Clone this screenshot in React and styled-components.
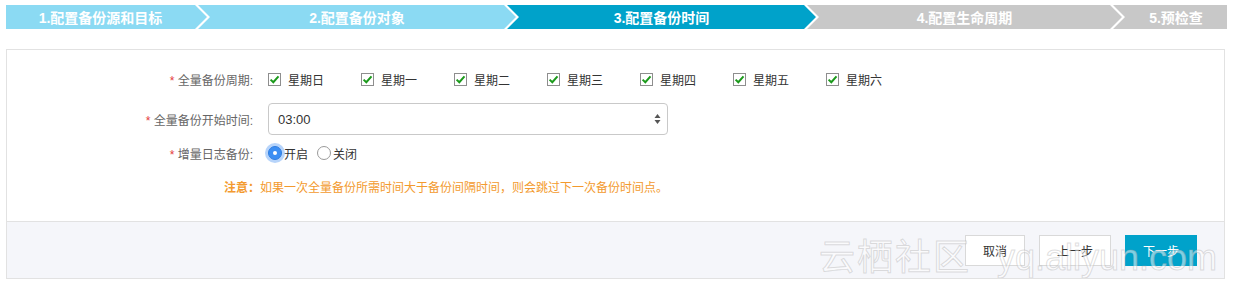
import React from "react";
import styled, { createGlobalStyle, css } from "styled-components";

const GlobalStyle = createGlobalStyle`
  html, body {
    margin: 0;
    padding: 0;
    background: #fff;
  }
  body {
    font-family: "Liberation Sans", "Noto Sans CJK SC", sans-serif;
    -webkit-font-smoothing: antialiased;
  }
`;

const steps = [
  { label: "1.配置备份源和目标", width: 201, state: "done" },
  { label: "2.配置备份对象", width: 318, state: "done" },
  { label: "3.配置备份时间", width: 309, state: "active" },
  { label: "4.配置生命周期", width: 315, state: "todo" },
  { label: "5.预检查", width: 114, state: "todo" },
];

const days = ["星期日", "星期一", "星期二", "星期三", "星期四", "星期五", "星期六"];

const stepColors = {
  done: "#8bdaf3",
  active: "#00a2ca",
  todo: "#c8c8c8",
};

function App() {
  return (
    <>
      <GlobalStyle />
      <Page>
        <StepBar>
          {steps.map((s, i) => (
            <Step
              key={s.label}
              $w={s.width}
              $state={s.state}
              $first={i === 0}
              $last={i === steps.length - 1}
            >
              {s.label}
            </Step>
          ))}
        </StepBar>

        <Panel>
          <FormBody>
            <FormRow $top={0}>
              <Label>
                <Star>*</Star> 全量备份周期:
              </Label>
              <Controls>
                {days.map((d) => (
                  <DayItem key={d}>
                    <CheckBox>
                      <svg width="11" height="11" viewBox="0 0 11 11">
                        <path
                          d="M1.6 5.6 L4.3 8.2 L9.5 2.4"
                          fill="none"
                          stroke="#1b9a1b"
                          strokeWidth="2"
                        />
                      </svg>
                    </CheckBox>
                    <DayText>{d}</DayText>
                  </DayItem>
                ))}
              </Controls>
            </FormRow>

            <FormRow $top={12}>
              <Label>
                <Star>*</Star> 全量备份开始时间:
              </Label>
              <Controls>
                <Select>
                  <span>03:00</span>
                  <SelectArrows>
                    <svg width="7" height="12" viewBox="0 0 7 12">
                      <path d="M3.5 1 L6.5 5 L0.5 5 Z" fill="#555" />
                      <path d="M3.5 11 L6.5 7 L0.5 7 Z" fill="#555" />
                    </svg>
                  </SelectArrows>
                </Select>
              </Controls>
            </FormRow>

            <FormRow $top={8}>
              <Label>
                <Star>*</Star> 增量日志备份:
              </Label>
              <Controls>
                <RadioItem>
                  <Radio $checked />
                  <RadioText>开启</RadioText>
                </RadioItem>
                <RadioItem>
                  <Radio />
                  <RadioText>关闭</RadioText>
                </RadioItem>
              </Controls>
            </FormRow>

            <Note>
              <b>注意：</b>如果一次全量备份所需时间大于备份间隔时间，则会跳过下一次备份时间点。
            </Note>
          </FormBody>

          <Footer>
            <Button>取消</Button>
            <Button>上一步</Button>
            <Button $primary>下一步</Button>
            <Watermark aria-hidden="true">
              <span>云栖社区</span>
              <LatinMark>yq.aliyun.com</LatinMark>
            </Watermark>
          </Footer>
        </Panel>
      </Page>
    </>
  );
}

export default App;

//styles

const Page = styled.div`
  padding: 5px 7px 0 6px;
  width: 1221px;
`;

const StepBar = styled.div`
  display: flex;
  height: 24px;
`;

const Step = styled.div`
  flex: 0 0 ${({ $w }) => $w}px;
  height: 24px;
  margin-left: ${({ $first }) => ($first ? "0" : "-9px")};
  padding-left: ${({ $first }) => ($first ? "0" : "12px")};
  padding-right: ${({ $last }) => ($last ? "0" : "12px")};
  box-sizing: border-box;
  background: ${({ $state }) => stepColors[$state]};
  color: #fff;
  font-size: 14px;
  font-weight: 700;
  display: flex;
  align-items: center;
  justify-content: center;
  white-space: nowrap;
  clip-path: ${({ $first, $last }) =>
    $first
      ? "polygon(0 0, calc(100% - 12px) 0, 100% 50%, calc(100% - 12px) 100%, 0 100%)"
      : $last
      ? "polygon(0 0, 100% 0, 100% 100%, 0 100%, 12px 50%)"
      : "polygon(0 0, calc(100% - 12px) 0, 100% 50%, calc(100% - 12px) 100%, 0 100%, 12px 50%)"};
`;

const Panel = styled.div`
  margin-top: 20px;
  width: 1219px;
  border: 1px solid #e2e2e2;
  box-sizing: border-box;
`;

const FormBody = styled.div`
  height: 171px;
  padding-top: 17px;
  box-sizing: border-box;
  display: flow-root;
`;

const FormRow = styled.div`
  display: grid;
  grid-template-columns: 246px 1fr;
  column-gap: 15px;
  align-items: center;
  margin-top: ${({ $top }) => $top}px;
`;

const Label = styled.div`
  text-align: right;
  font-size: 12px;
  color: #666;
  white-space: nowrap;
`;

const Star = styled.span`
  color: #e4393c;
`;

const Controls = styled.div`
  display: flex;
  align-items: center;
`;

const DayItem = styled.div`
  flex: 0 0 93px;
  display: flex;
  align-items: center;
  height: 24px;
`;

const CheckBox = styled.span`
  width: 13px;
  height: 13px;
  box-sizing: border-box;
  border: 1px solid #8e8e8e;
  background: #fff;
  display: flex;
  align-items: center;
  justify-content: center;
`;

const DayText = styled.span`
  margin-left: 7px;
  font-size: 12px;
  color: #333;
`;

const Select = styled.div`
  width: 400px;
  height: 32px;
  box-sizing: border-box;
  border: 1px solid #c9c9c9;
  border-radius: 4px;
  display: flex;
  align-items: center;
  justify-content: space-between;
  padding: 0 6px 0 9px;
  font-size: 13px;
  color: #333;
`;

const SelectArrows = styled.span`
  display: flex;
  align-items: center;
`;

const RadioItem = styled.label`
  display: flex;
  align-items: center;
  margin-right: 9px;
  height: 20px;
`;

const Radio = styled.span`
  width: 14px;
  height: 14px;
  box-sizing: border-box;
  border-radius: 50%;
  position: relative;
  ${({ $checked }) =>
    $checked
      ? css`
          background: #3b8ef3;
          border: 1px solid #2f7de0;
          box-shadow: 0 0 0 3px rgba(95, 160, 245, 0.45);
          &::after {
            content: "";
            position: absolute;
            left: 4px;
            top: 4px;
            width: 4px;
            height: 4px;
            border-radius: 50%;
            background: #fff;
          }
        `
      : css`
          background: #fff;
          border: 1px solid #9a9a9a;
        `}
`;

const RadioText = styled.span`
  margin-left: 2px;
  font-size: 12px;
  color: #333;
`;

const Note = styled.div`
  margin: 15px 0 0 217px;
  font-size: 12px;
  color: #f39a2e;

  b {
    font-weight: 700;
  }
`;

const Footer = styled.div`
  position: relative;
  height: 57px;
  border-top: 1px solid #e2e2e2;
  background: #f5f6fa;
  display: flex;
  align-items: center;
  justify-content: flex-end;
  gap: 14px;
  padding-right: 27px;
  box-sizing: border-box;
  overflow: hidden;
`;

const Button = styled.button`
  height: 31px;
  padding: 0 17px;
  font-family: inherit;
  font-size: 12px;
  border: 1px solid ${({ $primary }) => ($primary ? "#00a2ca" : "#d9d9d9")};
  background: ${({ $primary }) => ($primary ? "#00a2ca" : "#fff")};
  color: ${({ $primary }) => ($primary ? "#fff" : "#333")};
  cursor: pointer;
`;

const Watermark = styled.div`
  position: absolute;
  left: 812px;
  top: 6px;
  pointer-events: none;
  display: flex;
  align-items: baseline;
  gap: 26px;
  font-size: 36px;
  letter-spacing: 2px;
  color: rgba(255, 255, 255, 0.5);
  -webkit-text-stroke: 1px rgba(160, 160, 160, 0.35);
  white-space: nowrap;
`;

const LatinMark = styled.span`
  font-family: "Liberation Sans", sans-serif;
  font-weight: 400;
  letter-spacing: 0;
`;
